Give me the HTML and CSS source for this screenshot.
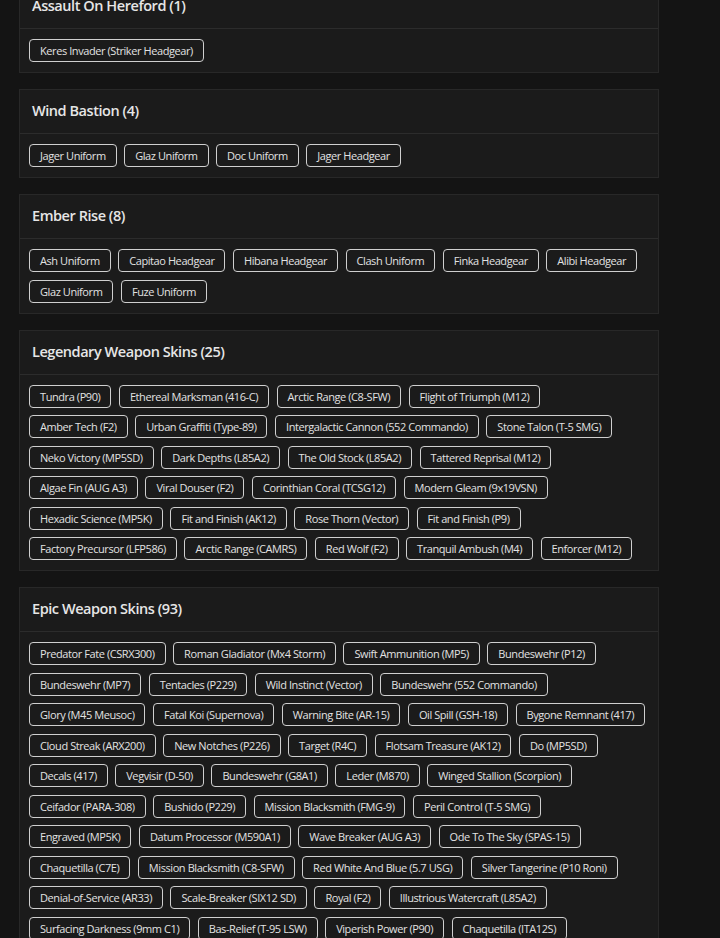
FILE: index.html
```html
<!DOCTYPE html>
<html lang="en">
<head>
<meta charset="utf-8">
<title>Collection</title>
<link rel="stylesheet" href="styles.css">
</head>
<body>
<main class="page">
  <section class="card">
    <h2 class="card-title">Assault On Hereford (1)</h2>
    <div class="tags">
      <span class="tag">Keres Invader (Striker Headgear)</span>
    </div>
  </section>
  <section class="card">
    <h2 class="card-title">Wind Bastion (4)</h2>
    <div class="tags">
      <span class="tag">Jager Uniform</span>
      <span class="tag">Glaz Uniform</span>
      <span class="tag">Doc Uniform</span>
      <span class="tag">Jager Headgear</span>
    </div>
  </section>
  <section class="card">
    <h2 class="card-title">Ember Rise (8)</h2>
    <div class="tags">
      <span class="tag">Ash Uniform</span>
      <span class="tag">Capitao Headgear</span>
      <span class="tag">Hibana Headgear</span>
      <span class="tag">Clash Uniform</span>
      <span class="tag">Finka Headgear</span>
      <span class="tag">Alibi Headgear</span>
      <span class="tag">Glaz Uniform</span>
      <span class="tag">Fuze Uniform</span>
    </div>
  </section>
  <section class="card">
    <h2 class="card-title">Legendary Weapon Skins (25)</h2>
    <div class="tags">
      <span class="tag">Tundra (P90)</span>
      <span class="tag">Ethereal Marksman (416-C)</span>
      <span class="tag">Arctic Range (C8-SFW)</span>
      <span class="tag">Flight of Triumph (M12)</span>
      <span class="tag">Amber Tech (F2)</span>
      <span class="tag">Urban Graffiti (Type-89)</span>
      <span class="tag">Intergalactic Cannon (552 Commando)</span>
      <span class="tag">Stone Talon (T-5 SMG)</span>
      <span class="tag">Neko Victory (MP5SD)</span>
      <span class="tag">Dark Depths (L85A2)</span>
      <span class="tag">The Old Stock (L85A2)</span>
      <span class="tag">Tattered Reprisal (M12)</span>
      <span class="tag">Algae Fin (AUG A3)</span>
      <span class="tag">Viral Douser (F2)</span>
      <span class="tag">Corinthian Coral (TCSG12)</span>
      <span class="tag">Modern Gleam (9x19VSN)</span>
      <span class="tag">Hexadic Science (MP5K)</span>
      <span class="tag">Fit and Finish (AK12)</span>
      <span class="tag">Rose Thorn (Vector)</span>
      <span class="tag">Fit and Finish (P9)</span>
      <span class="tag">Factory Precursor (LFP586)</span>
      <span class="tag">Arctic Range (CAMRS)</span>
      <span class="tag">Red Wolf (F2)</span>
      <span class="tag">Tranquil Ambush (M4)</span>
      <span class="tag">Enforcer (M12)</span>
    </div>
  </section>
  <section class="card">
    <h2 class="card-title">Epic Weapon Skins (93)</h2>
    <div class="tags">
      <span class="tag">Predator Fate (CSRX300)</span>
      <span class="tag">Roman Gladiator (Mx4 Storm)</span>
      <span class="tag">Swift Ammunition (MP5)</span>
      <span class="tag">Bundeswehr (P12)</span>
      <span class="tag">Bundeswehr (MP7)</span>
      <span class="tag">Tentacles (P229)</span>
      <span class="tag">Wild Instinct (Vector)</span>
      <span class="tag">Bundeswehr (552 Commando)</span>
      <span class="tag">Glory (M45 Meusoc)</span>
      <span class="tag">Fatal Koi (Supernova)</span>
      <span class="tag">Warning Bite (AR-15)</span>
      <span class="tag">Oil Spill (GSH-18)</span>
      <span class="tag">Bygone Remnant (417)</span>
      <span class="tag">Cloud Streak (ARX200)</span>
      <span class="tag">New Notches (P226)</span>
      <span class="tag">Target (R4C)</span>
      <span class="tag">Flotsam Treasure (AK12)</span>
      <span class="tag">Do (MP5SD)</span>
      <span class="tag">Decals (417)</span>
      <span class="tag">Vegvisir (D-50)</span>
      <span class="tag">Bundeswehr (G8A1)</span>
      <span class="tag">Leder (M870)</span>
      <span class="tag">Winged Stallion (Scorpion)</span>
      <span class="tag">Ceifador (PARA-308)</span>
      <span class="tag">Bushido (P229)</span>
      <span class="tag">Mission Blacksmith (FMG-9)</span>
      <span class="tag">Peril Control (T-5 SMG)</span>
      <span class="tag">Engraved (MP5K)</span>
      <span class="tag">Datum Processor (M590A1)</span>
      <span class="tag">Wave Breaker (AUG A3)</span>
      <span class="tag">Ode To The Sky (SPAS-15)</span>
      <span class="tag">Chaquetilla (C7E)</span>
      <span class="tag">Mission Blacksmith (C8-SFW)</span>
      <span class="tag">Red White And Blue (5.7 USG)</span>
      <span class="tag">Silver Tangerine (P10 Roni)</span>
      <span class="tag">Denial-of-Service (AR33)</span>
      <span class="tag">Scale-Breaker (SIX12 SD)</span>
      <span class="tag">Royal (F2)</span>
      <span class="tag">Illustrious Watercraft (L85A2)</span>
      <span class="tag">Surfacing Darkness (9mm C1)</span>
      <span class="tag">Bas-Relief (T-95 LSW)</span>
      <span class="tag">Viperish Power (P90)</span>
      <span class="tag">Chaquetilla (ITA12S)</span>
    </div>
  </section>
</main>
</body>
</html>
```

FILE: styles.css
```css
html, body {
  margin: 0;
  padding: 0;
  background: #141414;
}

body {
  font-family: "Open Sans", "Liberation Sans", sans-serif;
  color: #e4e4e4;
}

.page {
  width: 640px;
  margin: -16px 0 0 19px;
  display: flex;
  flex-direction: column;
  gap: 16px;
}

.card {
  background: #1b1b1b;
  border: 1px solid #282828;
}

.card-title {
  margin: 0;
  box-sizing: border-box;
  height: 44px;
  padding: 0 12px 2px;
  display: flex;
  align-items: center;
  font-size: 14.5px;
  font-weight: 600;
  letter-spacing: -0.45px;
  color: #e6e6e6;
  border-bottom: 1px solid #2c2c2c;
}

.tags {
  display: flex;
  flex-wrap: wrap;
  gap: 7.5px 7.5px;
  padding: 10px 12px 10px 9px;
}

.tag {
  box-sizing: border-box;
  height: 23px;
  line-height: 21px;
  padding: 0 10px;
  border: 1px solid #cfcfcf;
  border-radius: 4px;
  font-size: 11px;
  letter-spacing: -0.42px;
  color: #e2e2e2;
  white-space: nowrap;
}
```
